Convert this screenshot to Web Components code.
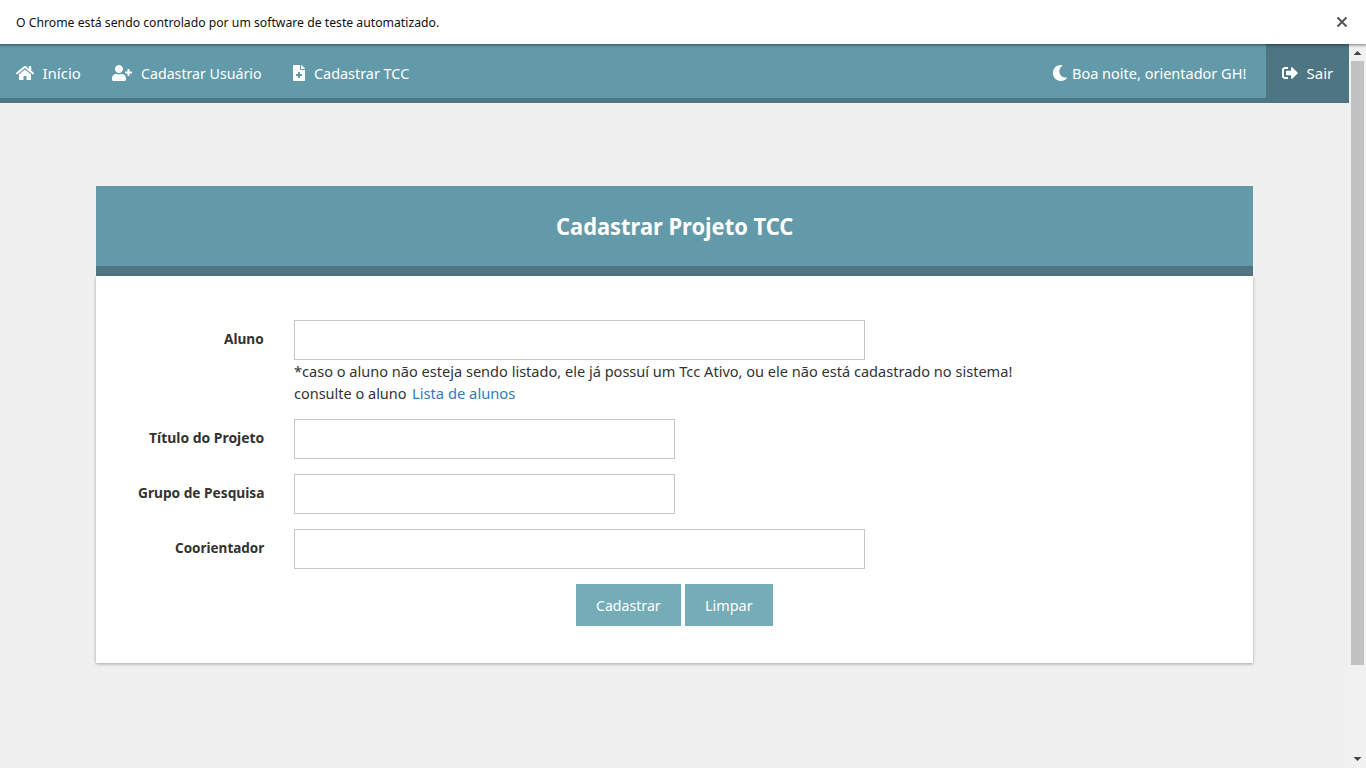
<!DOCTYPE html>
<html lang="pt-BR">
<head>
<meta charset="utf-8">
<title>Cadastrar Projeto TCC</title>
<style>
html,body{margin:0;height:100%;overflow:hidden}
body{font-family:"Noto Sans","Open Sans",sans-serif;font-size:15px;color:#333;background:#f0f0f0}
</style>
</head>
<body>
<app-page></app-page>
<script>
class Base extends HTMLElement{
  constructor(){super();this.attachShadow({mode:'open'});}
  connectedCallback(){this.shadowRoot.innerHTML=this.view();this.ready();}
  ready(){}
}

// Single line of text, condensed horizontally to the width given in "w".
customElements.define('fit-text',class extends Base{
  view(){return `<style>
    :host{display:inline-block;flex:none;width:${this.getAttribute('w')}px;white-space:nowrap;text-align:left}
    span{display:inline-block;transform-origin:0 50%}
  </style><span><slot></slot></span>`;}
  ready(){
    const s=this.shadowRoot.querySelector('span');
    const fit=()=>{s.style.transform=`scaleX(${this.getAttribute('w')/s.offsetWidth})`;};
    requestAnimationFrame(fit);
    fit();
  }
});

const ICONS={
  home:['0 0 576 512','M280.37 148.26L96 300.11V464a16 16 0 0 0 16 16l112.06-.29a16 16 0 0 0 15.92-16V368a16 16 0 0 1 16-16h64a16 16 0 0 1 16 16v95.64a16 16 0 0 0 16 16.05L464 480a16 16 0 0 0 16-16V300L295.67 148.26a12.19 12.19 0 0 0-15.3 0zM571.6 251.47L488 182.56V44.05a12 12 0 0 0-12-12h-56a12 12 0 0 0-12 12v72.61L318.47 43a48 48 0 0 0-61 0L4.34 251.47a12 12 0 0 0-1.6 16.9l25.5 31A12 12 0 0 0 45.15 301l235.22-193.74a12.19 12.19 0 0 1 15.3 0L530.9 301a12 12 0 0 0 16.9-1.6l25.5-31a12 12 0 0 0-1.7-16.93z'],
  userplus:['0 0 640 512','M624 208h-64v-64c0-8.8-7.2-16-16-16h-32c-8.8 0-16 7.2-16 16v64h-64c-8.8 0-16 7.2-16 16v32c0 8.8 7.2 16 16 16h64v64c0 8.8 7.2 16 16 16h32c8.8 0 16-7.2 16-16v-64h64c8.8 0 16-7.2 16-16v-32c0-8.8-7.2-16-16-16zm-400 48c70.7 0 128-57.3 128-128S294.7 0 224 0 96 57.3 96 128s57.3 128 128 128zm89.6 32h-16.7c-22.2 10.2-46.9 16-72.9 16s-50.6-5.8-72.9-16h-16.7C60.2 288 0 348.2 0 422.4V464c0 26.5 21.5 48 48 48h352c26.5 0 48-21.5 48-48v-41.6c0-74.2-60.2-134.4-134.4-134.4z'],
  file:['0 0 384 512','M377 105L279.1 7c-4.5-4.5-10.6-7-17-7H256v128h128v-6.1c0-6.3-2.5-12.4-7-16.9zm-153 31V0H24C10.7 0 0 10.7 0 24v464c0 13.3 10.7 24 24 24h336c13.3 0 24-10.7 24-24V160H248c-13.2 0-24-10.8-24-24zm64 160v48c0 4.4-3.6 8-8 8h-56v56c0 4.4-3.6 8-8 8h-48c-4.4 0-8-3.6-8-8v-56h-56c-4.4 0-8-3.6-8-8v-48c0-4.4 3.6-8 8-8h56v-56c0-4.4 3.6-8 8-8h48c4.4 0 8 3.6 8 8v56h56c4.4 0 8 3.6 8 8z'],
  moon:['0 0 512 512','M283.211 512c78.962 0 151.079-35.925 198.857-94.792 7.068-8.708-.639-21.43-11.562-19.35-124.203 23.654-238.262-71.576-238.262-196.954 0-72.222 38.662-138.635 101.498-174.394 9.686-5.512 7.25-20.197-3.756-22.23A258.156 258.156 0 0 0 283.211 0c-141.309 0-256 114.511-256 256 0 141.309 114.511 256 256 256z'],
  signout:['0 0 512 512','M497 273L329 441c-15 15-41 4.5-41-17v-96H152c-13.3 0-24-10.7-24-24v-96c0-13.3 10.7-24 24-24h136V88c0-21.4 25.9-32 41-17l168 168c9.3 9.4 9.3 24.6 0 34zM192 436v-40c0-6.6-5.4-12-12-12H96c-17.7 0-32-14.3-32-32V160c0-17.7 14.3-32 32-32h84c6.6 0 12-5.4 12-12V76c0-6.6-5.4-12-12-12H96c-53 0-96 43-96 96v192c0 53 43 96 96 96h84c6.6 0 12-5.4 12-12z']
};
customElements.define('app-icon',class extends Base{
  view(){
    const [box,d]=ICONS[this.getAttribute('name')];
    return `<style>:host{display:block;flex:none;height:16px}svg{display:block;height:16px;fill:currentColor}</style>
    <svg viewBox="${box}" width="${box.split(' ')[2]/32}" height="16"><path d="${d}"/></svg>`;
  }
});

customElements.define('info-bar',class extends Base{
  view(){return `<style>
    :host{display:flex;flex:none;align-items:center;justify-content:space-between;height:44px;box-sizing:border-box;padding:0 18px 0 16px;background:#fff;color:#111;font-size:12px;position:relative;z-index:1;box-shadow:0 0 3px 1px rgba(0,0,0,.5)}
    svg{display:block}
  </style>
  <fit-text w="423.5">O Chrome está sendo controlado por um software de teste automatizado.</fit-text>
  <svg width="12" height="12" viewBox="0 0 12 12"><path d="M1.5 1.5l9 9M10.5 1.5l-9 9" stroke="#555" stroke-width="2"/></svg>`;}
});

customElements.define('nav-item',class extends Base{
  view(){return `<style>
    :host{display:flex;align-items:center;height:59px;box-sizing:border-box;padding:0 15.5px 0 16px;border-bottom:5px solid #4d7682;gap:var(--gap,8.5px);color:#fff}
    :host([exit]){background:#4d7682}
    fit-text{margin-top:4px}
    app-icon{margin-top:4px}
  </style><app-icon name="${this.getAttribute('icon')}"></app-icon><fit-text w="${this.getAttribute('w')}"><slot></slot></fit-text>`;}
});

customElements.define('nav-bar',class extends Base{
  view(){return `<style>
    :host{display:flex;flex:none;height:59px;background:linear-gradient(#639aa9 54px,#4d7682 54px)}
    .end{margin-left:auto;--gap:4px;padding-right:20px}
  </style>
  <nav-item icon="home" w="38">Início</nav-item>
  <nav-item icon="userplus" w="121">Cadastrar Usuário</nav-item>
  <nav-item icon="file" w="95">Cadastrar TCC</nav-item>
  <nav-item class="end" icon="moon" w="174">Boa noite, orientador GH!</nav-item>
  <nav-item exit icon="signout" w="27">Sair</nav-item>`;}
});

customElements.define('form-row',class extends Base{
  view(){return `<style>
    :host{display:grid;grid-template-columns:168px 1fr;column-gap:30px;margin-bottom:15px}
    .label{font-weight:700;text-align:right;line-height:22px;padding-top:7px}
    input{display:block;box-sizing:border-box;width:${this.getAttribute('size')}px;height:40px;border:1px solid #c6c6c6;background:#fff;margin:0;padding:6px 12px;font:inherit;outline:0}
    .hint{line-height:22px}
  </style>
  <div class="label"><fit-text w="${this.getAttribute('w')}">${this.getAttribute('label')}</fit-text></div>
  <div><input type="text"><div class="hint"><slot></slot></div></div>`;}
});

customElements.define('app-button',class extends Base{
  view(){return `<style>
    :host{display:block}
    button{display:block;height:42px;border:0;margin:0;padding:0 20px;background:#74adb8;color:#fff;font:inherit}
  </style><button><fit-text w="${this.getAttribute('w')}"><slot></slot></fit-text></button>`;}
});

customElements.define('project-card',class extends Base{
  view(){return `<style>
    :host{display:block;flex:none;width:1157px;margin:83px 0 0 96px}
    header{height:90px;box-sizing:border-box;background:#639aa9;border-bottom:10px solid #4d7682;display:flex;align-items:center;justify-content:center;color:#fff;font-size:24.5px;font-weight:700;padding-bottom:2px}
    main{height:387px;box-sizing:border-box;background:#fff;padding-top:44px;box-shadow:0 1px 3px rgba(0,0,0,.32)}
    .line{display:flex;height:22px;gap:5px}
    a{color:#337ab7;text-decoration:none}
    .actions{display:flex;justify-content:center;gap:4px}
    header{font-size:24px}
  </style>
  <header><fit-text w="237">Cadastrar Projeto TCC</fit-text></header>
  <main>
    <form-row label="Aluno" w="40" size="571">
      <div class="line"><fit-text w="718">*caso o aluno não esteja sendo listado, ele já possuí um Tcc Ativo, ou ele não está cadastrado no sistema!</fit-text></div>
      <div class="line"><fit-text w="113">consulte o aluno</fit-text><a><fit-text w="103">Lista de alunos</fit-text></a></div>
    </form-row>
    <form-row label="Título do Projeto" w="115" size="381"></form-row>
    <form-row label="Grupo de Pesquisa" w="126" size="381"></form-row>
    <form-row label="Coorientador" w="89" size="571"></form-row>
    <div class="actions"><app-button w="65">Cadastrar</app-button><app-button w="48">Limpar</app-button></div>
  </main>`;}
});

customElements.define('scroll-bar',class extends Base{
  view(){return `<style>
    :host{display:flex;flex-direction:column;flex:none;width:17px;background:#f1f1f1}
    svg{display:block;flex:none}
    .thumb{width:13px;height:604px;margin:0 2px;background:#c1c1c1}
    .down{margin-top:auto}
  </style>
  <svg width="17" height="17"><path d="M4.5 11h8L8.5 7z" fill="#444"/></svg>
  <div class="thumb"></div>
  <svg class="down" width="17" height="17"><path d="M4.5 6h8l-4 4z" fill="#444"/></svg>`;}
});

customElements.define('app-page',class extends Base{
  view(){return `<style>
    :host{display:flex;flex-direction:column;height:768px}
    .view{display:flex;flex:1;min-height:0}
    .content{flex:1;display:flex;flex-direction:column;background:#f0f0f0}
  </style>
  <info-bar></info-bar>
  <div class="view"><div class="content"><nav-bar></nav-bar><project-card></project-card></div><scroll-bar></scroll-bar></div>`;}
});
</script>
</body>
</html>
